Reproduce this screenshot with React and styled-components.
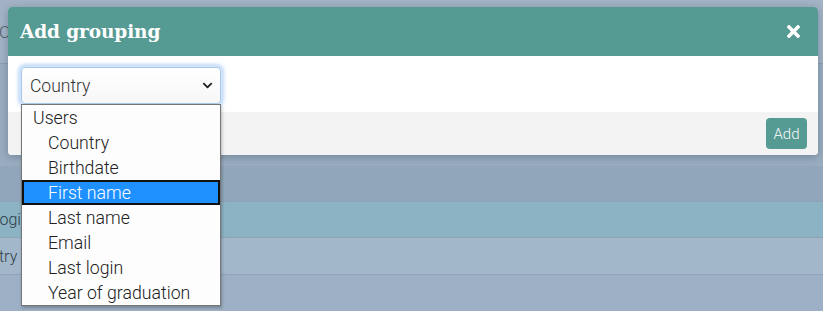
import React from "react";
import styled, { createGlobalStyle } from "styled-components";
import { FaTimes, FaChevronDown } from "react-icons/fa";

const GlobalStyle = createGlobalStyle`
  html, body {
    margin: 0;
    padding: 0;
    background: #9fb0c3;
    font-family: Roboto, "Liberation Sans", sans-serif;
    overflow: hidden;
  }
`;

const Page = styled.div`
  width: 823px;
  height: 311px;
  display: flex;
  flex-direction: column;
  background: #9fb0c3;
  overflow: hidden;
`;

const TopBar = styled.div`
  height: 63px;
  flex-shrink: 0;
  display: flex;
  align-items: center;
  border-bottom: 1px solid #8d9fb2;
  background: #a3b3c5;
`;

const TopText = styled.span`
  margin-left: -1px;
  font-size: 17px;
  font-weight: 300;
  color: #4b5a69;
`;

const Gap = styled.div`
  height: 102px;
  flex-shrink: 0;
  background: #9aadc0;
`;

const Row = styled.div`
  height: ${(p) => p.$h}px;
  flex-shrink: 0;
  display: flex;
  align-items: center;
  background: ${(p) => p.$bg};
  border-bottom: 1px solid #8ea3b6;
`;

const Cell = styled.span`
  margin-left: ${(p) => p.$shift}px;
  font-size: 16px;
  font-weight: 300;
  color: #2d3e48;
`;

const Modal = styled.div`
  position: absolute;
  top: 7px;
  left: 8px;
  width: 810px;
  border-radius: 4px;
  background: #fff;
  box-shadow: 0 2px 8px rgba(40, 60, 80, 0.35);
`;

const Header = styled.div`
  height: 49px;
  display: flex;
  align-items: center;
  justify-content: space-between;
  padding: 0 15px 0 12px;
  background: #559a93;
  border-radius: 4px 4px 0 0;
`;

const Title = styled.h2`
  margin: 0;
  font-family: "DejaVu Serif", "Liberation Serif", serif;
  font-weight: bold;
  font-size: 18.5px;
  color: #fff;
  letter-spacing: -0.1px;
`;

const Close = styled.button`
  border: 0;
  background: none;
  padding: 0;
  color: #fff;
  display: flex;
  font-size: 19px;
`;

const Body = styled.div`
  height: 56px;
  padding: 11px 13px 0;
  box-sizing: border-box;
  position: relative;
`;

const Select = styled.div`
  width: 200px;
  height: 37px;
  box-sizing: border-box;
  display: flex;
  align-items: center;
  justify-content: space-between;
  padding: 0 7px 0 8px;
  border: 1px solid #a9c8ea;
  border-radius: 4px;
  background: linear-gradient(#fff, #f7f7f7);
  box-shadow: 0 0 0 2px #cfe3fb, 0 0 4px 2px #9cc6f4;
  font-size: 17.5px;
  font-weight: 300;
  color: #333;
`;

const Footer = styled.div`
  height: 43px;
  display: flex;
  align-items: center;
  justify-content: flex-end;
  padding: 0 11px;
  background: #f3f3f3;
  border-radius: 0 0 4px 4px;
`;

const AddButton = styled.button`
  width: 41px;
  height: 31px;
  border: 0;
  border-radius: 4px;
  background: #559a93;
  color: #f4f8f7;
  font-family: Roboto, "Liberation Sans", sans-serif;
  font-size: 15px;
  font-weight: 300;
  padding: 0;
`;

const ListBox = styled.ul`
  position: absolute;
  top: 48px;
  left: 13px;
  width: 200px;
  margin: 0;
  padding: 0;
  list-style: none;
  box-sizing: border-box;
  border: 1px solid #767676;
  background: #fdfdfd;
  box-shadow: 1px 2px 3px rgba(0, 0, 0, 0.25);
  z-index: 2;
`;

const Item = styled.li`
  height: 25px;
  box-sizing: border-box;
  display: flex;
  align-items: center;
  font-size: 17.7px;
  font-weight: 300;
  color: ${(p) => (p.$active ? "#fff" : "#222")};
  background: ${(p) => (p.$active ? "#1e90ff" : "transparent")};
  border: ${(p) => (p.$active ? "2px solid #111" : "0")};
  padding-left: ${(p) => (p.$group ? 11 : p.$active ? 24 : 26)}px;
`;

const options = [
  "Country",
  "Birthdate",
  "First name",
  "Last name",
  "Email",
  "Last login",
  "Year of graduation",
];

export default function App() {
  return (
    <>
      <GlobalStyle />
      <Page>
        <TopBar>
          <TopText>C</TopText>
        </TopBar>
        <Gap />
        <Row $h={35} $bg="#91a6ba" />
        <Row $h={35} $bg="#8cb3c4">
          <Cell $shift={-9}>Login</Cell>
        </Row>
        <Row $h={36} $bg="#a3b7cb">
          <Cell $shift={-38}>Country</Cell>
        </Row>
        <Row $h={40} $bg="#9db0c5" />
      </Page>
      <Modal>
        <Header>
          <Title>Add grouping</Title>
          <Close>
            <FaTimes />
          </Close>
        </Header>
        <Body>
          <Select>
            <span>Country</span>
            <FaChevronDown size={11} color="#222" />
          </Select>
          <ListBox>
            <Item $group>Users</Item>
            {options.map((o) => (
              <Item key={o} $active={o === "First name"}>
                {o}
              </Item>
            ))}
          </ListBox>
        </Body>
        <Footer>
          <AddButton>Add</AddButton>
        </Footer>
      </Modal>
    </>
  );
}
